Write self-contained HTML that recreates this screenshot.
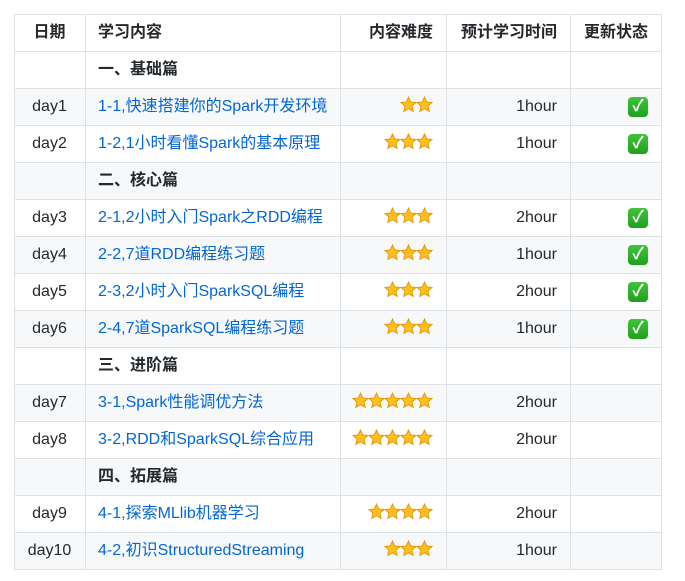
<!DOCTYPE html>
<html><head><meta charset="utf-8"><style>
body{margin:0;background:#fff;font-family:"Liberation Sans","Noto Sans CJK SC",sans-serif;font-size:16px;color:#24292e}
table{position:absolute;left:14px;top:14px;border-collapse:collapse;table-layout:fixed;width:647px}
td,th{border:1px solid #dfe2e5;height:37px;padding:0 13px 0 12px;box-sizing:border-box;white-space:nowrap;line-height:20px;vertical-align:middle;background:#fff}
th{font-weight:bold}
tr.g td{background:#f6f8fa}
.c{text-align:center}.r{text-align:right}
a{color:#0366d6;text-decoration:none}
.s{display:inline-block;width:17px;height:17px;vertical-align:-1px;margin-left:-1px}
.k{display:inline-block;width:20px;height:20px;border-radius:4px;background:linear-gradient(#3fc43a,#1fa01f);color:#fff;font-size:16px;line-height:20px;text-align:center;font-weight:bold;vertical-align:1px}
</style></head><body>
<svg width="0" height="0" style="position:absolute"><defs><symbol id="st" viewBox="0 0 24 24"><path d="M12 1.5l3.2 7 7.3.7-5.5 5 1.6 7.5L12 17.9 5.4 21.7 7 14.2 1.5 9.2l7.3-.7z" fill="#fcc21b" stroke="#e8960c" stroke-width="1.4"/></symbol></defs></svg>
<table>
<colgroup><col style="width:71px"><col style="width:255px"><col style="width:106px"><col style="width:124px"><col style="width:91px"></colgroup>
<tr><th class="c">日期</th><th style="text-align:left">学习内容</th><th class="r">内容难度</th><th class="r">预计学习时间</th><th class="r">更新状态</th></tr>
<tr><td></td><td><b>一、基础篇</b></td><td></td><td></td><td></td></tr>
<tr class="g"><td class="c">day1</td><td><a>1-1,快速搭建你的Spark开发环境</a></td><td class="r">S2</td><td class="r">1hour</td><td class="r"><span class="k">✓</span></td></tr>
<tr><td class="c">day2</td><td><a>1-2,1小时看懂Spark的基本原理</a></td><td class="r">S3</td><td class="r">1hour</td><td class="r"><span class="k">✓</span></td></tr>
<tr class="g"><td></td><td><b>二、核心篇</b></td><td></td><td></td><td></td></tr>
<tr><td class="c">day3</td><td><a>2-1,2小时入门Spark之RDD编程</a></td><td class="r">S3</td><td class="r">2hour</td><td class="r"><span class="k">✓</span></td></tr>
<tr class="g"><td class="c">day4</td><td><a>2-2,7道RDD编程练习题</a></td><td class="r">S3</td><td class="r">1hour</td><td class="r"><span class="k">✓</span></td></tr>
<tr><td class="c">day5</td><td><a>2-3,2小时入门SparkSQL编程</a></td><td class="r">S3</td><td class="r">2hour</td><td class="r"><span class="k">✓</span></td></tr>
<tr class="g"><td class="c">day6</td><td><a>2-4,7道SparkSQL编程练习题</a></td><td class="r">S3</td><td class="r">1hour</td><td class="r"><span class="k">✓</span></td></tr>
<tr><td></td><td><b>三、进阶篇</b></td><td></td><td></td><td></td></tr>
<tr class="g"><td class="c">day7</td><td><a>3-1,Spark性能调优方法</a></td><td class="r">S5</td><td class="r">2hour</td><td></td></tr>
<tr><td class="c">day8</td><td><a>3-2,RDD和SparkSQL综合应用</a></td><td class="r">S5</td><td class="r">2hour</td><td></td></tr>
<tr class="g"><td></td><td><b>四、拓展篇</b></td><td></td><td></td><td></td></tr>
<tr><td class="c">day9</td><td><a>4-1,探索MLlib机器学习</a></td><td class="r">S4</td><td class="r">2hour</td><td></td></tr>
<tr class="g"><td class="c">day10</td><td><a>4-2,初识StructuredStreaming</a></td><td class="r">S3</td><td class="r">1hour</td><td></td></tr>
</table>
<script>
document.querySelectorAll('td.r').forEach(function(td){var m=td.textContent.match(/^S(\d)$/);if(m){var h='';for(var i=0;i<+m[1];i++)h+='<svg class="s"><use href="#st"/></svg>';td.innerHTML=h;}});
</script>
</body></html>
